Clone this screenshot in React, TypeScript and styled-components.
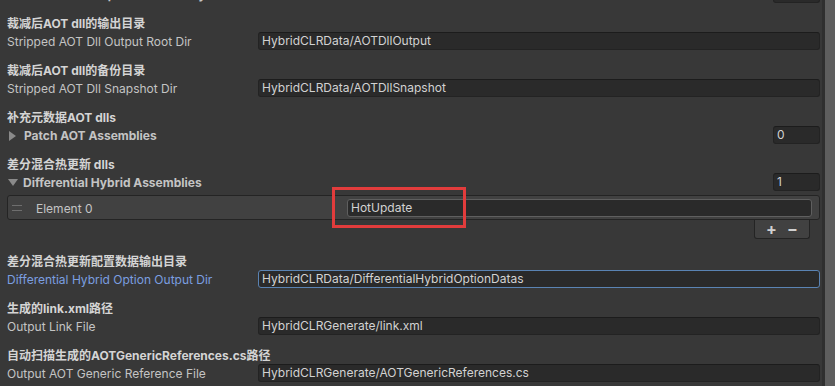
import React from "react";
import styled, { createGlobalStyle } from "styled-components";

const Global = createGlobalStyle`
  html, body { margin: 0; padding: 0; background: #383838; overflow: hidden; }
  body { font-family: Inter, "Noto Sans CJK SC", sans-serif; font-size: 12px; color: #c4c4c4; }
`;

const Page = styled.div`
  display: flex;
  width: 835px;
  height: 386px;
  overflow: hidden;
  background: #383838;
`;

const Content = styled.div`
  flex: 1;
  display: flex;
  flex-direction: column;
  padding: 0 2px 0 7px;
  margin-top: -15px;
`;

const Scrollbar = styled.div`
  width: 10px;
  border-left: 3px solid #2f2f2f;
  background: #5e5e5e;
`;

const Group = styled.div<{ $gap?: number }>`
  display: flex;
  flex-direction: column;
  margin-bottom: ${(p) => p.$gap ?? 11}px;
`;

const Header = styled.div`
  height: 18px;
  line-height: 20px;
  font-weight: 700;
  color: #d4d4d4;
  font-family: Inter, "Noto Sans CJK SC", sans-serif;
  white-space: nowrap;
`;

const Row = styled.div`
  display: flex;
  align-items: center;
  height: 18px;
`;

const Label = styled.div<{ $focus?: boolean; $bold?: boolean }>`
  width: 251px;
  flex: none;
  line-height: 18px;
  padding-top: 1px;
  color: ${(p) => (p.$focus ? "#7b9fe0" : "#c4c4c4")};
  font-weight: ${(p) => (p.$bold ? 700 : 400)};
  white-space: nowrap;
  display: flex;
  align-items: center;
`;

const Arrow = styled.span<{ $open?: boolean }>`
  display: inline-block;
  width: 0;
  height: 0;
  margin: 0 8px 0 2px;
  ${(p) =>
    p.$open
      ? `border-left: 5px solid transparent; border-right: 5px solid transparent; border-top: 7px solid #8a8a8a; margin-left: 1px; margin-right: 5px;`
      : `border-top: 5px solid transparent; border-bottom: 5px solid transparent; border-left: 7px solid #8a8a8a;`}
`;

const Field = styled.div<{ $focus?: boolean }>`
  flex: 1;
  height: 18px;
  box-sizing: border-box;
  background: #2a2a2a;
  border: 1px solid ${(p) => (p.$focus ? "#5a83b3" : "#232323")};
  border-top-color: ${(p) => (p.$focus ? "#5a83b3" : "#1c1c1c")};
  border-radius: 3px;
  color: #d2d2d2;
  padding: 0 3px;
  line-height: 16px;
  white-space: nowrap;
`;

const Spacer = styled.div`
  flex: 1;
`;

const CountField = styled(Field)`
  flex: none;
  width: 47px;
`;

const ListBox = styled.div`
  position: relative;
  margin-top: 4px;
  height: 25px;
  box-sizing: border-box;
  background: #414141;
  border: 1px solid #242424;
  border-radius: 3px;
  display: flex;
  align-items: center;
  padding: 0 7px 0 4px;
`;

const Handle = styled.div`
  width: 10px;
  height: 4px;
  border-top: 1px solid #6e6e6e;
  border-bottom: 1px solid #6e6e6e;
  margin-right: 14px;
  margin-top: 1px;
`;

const ElementLabel = styled.div`
  width: 311px;
  color: #c4c4c4;
  padding-top: 1px;
`;

const ElementField = styled(Field)`
  border-color: #5f5f5f;
  border-top-color: #5f5f5f;
`;

const Highlight = styled.div`
  position: absolute;
  left: 324px;
  top: -9px;
  width: 134px;
  height: 41px;
  box-sizing: border-box;
  border: 3px solid #e23c3c;
  pointer-events: none;
`;

const FooterRow = styled.div`
  display: flex;
  justify-content: flex-end;
  padding-right: 10px;
`;

const Footer = styled.div`
  width: 56px;
  height: 19px;
  box-sizing: border-box;
  background: #414141;
  border: 1px solid #242424;
  border-top: none;
  border-radius: 0 0 3px 3px;
  display: flex;
  align-items: center;
  justify-content: space-around;
  padding: 0 6px;
  color: #d0d0d0;
  font-weight: 700;
  font-size: 16px;
  line-height: 16px;
`;

type Item = { zh: string; en: string; value: string; focus?: boolean };

const items1: Item[] = [
  { zh: "裁减后AOT dll的输出目录", en: "Stripped AOT Dll Output Root Dir", value: "HybridCLRData/AOTDllOutput" },
  { zh: "裁减后AOT dll的备份目录", en: "Stripped AOT Dll Snapshot Dir", value: "HybridCLRData/AOTDllSnapshot" },
];

const items2: Item[] = [
  {
    zh: "差分混合热更新配置数据输出目录",
    en: "Differential Hybrid Option Output Dir",
    value: "HybridCLRData/DifferentialHybridOptionDatas",
    focus: true,
  },
  { zh: "生成的link.xml路径", en: "Output Link File", value: "HybridCLRGenerate/link.xml" },
  {
    zh: "自动扫描生成的AOTGenericReferences.cs路径",
    en: "Output AOT Generic Reference File",
    value: "HybridCLRGenerate/AOTGenericReferences.cs",
  },
];

const PathGroup = ({ item }: { item: Item }) => (
  <Group>
    <Header>{item.zh}</Header>
    <Row>
      <Label $focus={item.focus}>{item.en}</Label>
      <Field $focus={item.focus}>{item.value}</Field>
    </Row>
  </Group>
);

export default function App() {
  return (
    <Page>
      <Global />
      <Content>
        <Group>
          <Row>
            <Label $bold>
              <Arrow />
              External Hot Update Assembliy Dirs
            </Label>
            <Spacer />
            <CountField>0</CountField>
          </Row>
        </Group>
        {items1.map((it) => (
          <PathGroup key={it.en} item={it} />
        ))}
        <Group>
          <Header>补充元数据AOT dlls</Header>
          <Row>
            <Label $bold>
              <Arrow />
              Patch AOT Assemblies
            </Label>
            <Spacer />
            <CountField>0</CountField>
          </Row>
        </Group>
        <Group $gap={13}>
          <Header>差分混合热更新 dlls</Header>
          <Row>
            <Label $bold>
              <Arrow $open />
              Differential Hybrid Assemblies
            </Label>
            <Spacer />
            <CountField>1</CountField>
          </Row>
          <ListBox>
            <Handle />
            <ElementLabel>Element 0</ElementLabel>
            <ElementField>HotUpdate</ElementField>
            <Highlight />
          </ListBox>
          <FooterRow>
            <Footer>
              <span>+</span>
              <span>−</span>
            </Footer>
          </FooterRow>
        </Group>
        {items2.map((it) => (
          <PathGroup key={it.en} item={it} />
        ))}
      </Content>
      <Scrollbar />
    </Page>
  );
}
